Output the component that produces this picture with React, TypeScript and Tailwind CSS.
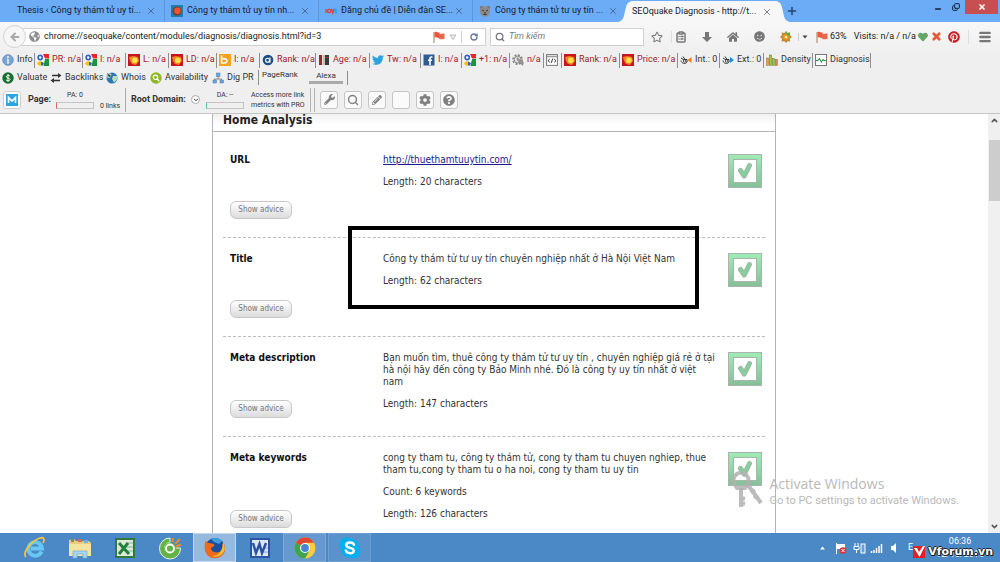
import React, { ReactNode } from 'react';
import { ArrowLeft, Search, ClipboardList, RotateCw, Menu, X, Plus, ChevronDown, ChevronUp, Copy, Minus } from 'lucide-react';
import { FaPinterest, FaHome, FaRegStar, FaSmile, FaTwitter, FaGlobeAmericas, FaCog, FaQuestionCircle, FaHeart, FaWrench, FaPencilAlt } from 'react-icons/fa';

const UI = "font-['Roboto','Open_Sans',sans-serif]";
const TAHOMA = "font-['DejaVu_Sans_Condensed','DejaVu_Sans',sans-serif]";

function GoogleIcon() {
  return (
    <svg viewBox="0 0 12 12" className="size-3 shrink-0">
      <rect width="12" height="12" fill="#fff" />
      <path d="M6 0h6v4.500H8z" fill="#e8262b" />
      <path d="M8 5h4v7H6.500z" fill="#16973c" />
      <circle cx="3.200" cy="3.500" r="2.100" fill="#fff" stroke="#2b62c4" strokeWidth="1.600" />
      <ellipse cx="3" cy="9.500" rx="2.800" ry="2.200" fill="#f3c21b" />
      <path d="M4 7.500l3 1.500-1 2.500H4z" fill="#2b62c4" />
    </svg>
  );
}

function SemIcon() {
  return (
    <svg viewBox="0 0 12 12" className="size-3 shrink-0">
      <rect width="12" height="12" fill="#c6161d" />
      <path d="M1 3l4-1 5 1 1 4-3 4-4-1-2-3z" fill="#f58220" />
      <circle cx="6.800" cy="6.300" r="2.800" fill="#ffe14a" />
    </svg>
  );
}

function BingIcon() {
  return (
    <svg viewBox="0 0 12 12" className="size-3 shrink-0">
      <rect width="12" height="12" fill="#f5a21c" />
      <path d="M2.600 1.500V9h3.600a2.400 2.200 0 0 0 0-4.200H3" fill="none" stroke="#fff" strokeWidth="1.600" />
    </svg>
  );
}

function InfoIcon() {
  return (
    <svg viewBox="0 0 12 12" className="size-3 shrink-0">
      <circle cx="6" cy="6" r="5.300" fill="#78a5d1" stroke="#5c87b3" strokeWidth=".8" />
      <path d="M6 5v4M5 9h2M5.200 5H6" stroke="#fff" strokeWidth="1.200" />
      <circle cx="6" cy="3" r=".9" fill="#fff" />
    </svg>
  );
}

function AlexaIcon() {
  return (
    <svg viewBox="0 0 12 12" className="size-3 shrink-0">
      <circle cx="6" cy="6" r="5.300" fill="#1d4f86" />
      <circle cx="5.600" cy="6.200" r="2" fill="none" stroke="#fff" strokeWidth="1.100" />
      <path d="M8 3.600v5.200" stroke="#fff" strokeWidth="1.100" />
    </svg>
  );
}

function AgeIcon() {
  return (
    <svg viewBox="0 0 12 12" className="size-3 shrink-0">
      <rect x="1" y="1" width="3" height="10" fill="#9b2b2b" />
      <rect x="4.600" y="1" width="1.600" height="10" fill="#c9bdb4" />
      <rect x="6.800" y="1" width="4.200" height="10" fill="#3a3a3a" />
      <path d="M7.500 3.500h3" stroke="#b33" />
    </svg>
  );
}

function FacebookIcon() {
  return (
    <svg viewBox="0 0 12 12" className="size-3 shrink-0">
      <rect x=".5" y=".5" width="11" height="11" fill="#2f5a94" />
      <path d="M9.500 3H8.200C7.300 3 7 3.500 7 4.200V11M5 6.200h4" stroke="#fff" strokeWidth="1.600" fill="none" />
    </svg>
  );
}

function GearIcon() {
  return (
    <svg viewBox="0 0 12 12" className="size-3 shrink-0">
      <circle cx="5.600" cy="5.600" r="4.500" fill="none" stroke="#888" strokeWidth="1.800" strokeDasharray="2 1.500" />
      <circle cx="5.600" cy="5.600" r="3.400" fill="#e9e9e9" stroke="#888" strokeWidth="1" />
      <path d="M5 3.500v2.500l5.500 5.500 1-3z" fill="#999" stroke="#777" strokeWidth=".5" />
    </svg>
  );
}

function SourceIcon() {
  return (
    <svg viewBox="0 0 12 12" className="size-3 shrink-0">
      <rect x=".6" y=".6" width="10.800" height="10.800" fill="#fff" stroke="#777" />
      <path d="M1 2.500h10" stroke="#999" strokeWidth="1.500" />
      <path d="M3.800 5L2 6.700l1.800 1.700M8.200 5L10 6.700 8.200 8.400M6.700 4.600l-1.400 4.200" stroke="#333" fill="none" />
    </svg>
  );
}

function LinkIcon({ out }: { out?: boolean }) {
  return (
    <svg viewBox="0 0 12 12" className="size-3 shrink-0">
      <path d="M1 4l3 2M3 2.500l2 3M1 6.500c0 3 5 4 6 1.500V5.500L4 5.500" fill="none" stroke="#333" strokeWidth="1" />
      <circle cx="4.600" cy="7" r="1.300" fill="none" stroke="#333" strokeWidth=".8" />
      {out ? <path d="M8 3l4 3-4 3z" fill="#1b8fd6" /> : <path d="M11.500 3v6L7.500 6z" fill="#f07a13" />}
    </svg>
  );
}

function DensityIcon() {
  return (
    <svg viewBox="0 0 12 12" className="size-3 shrink-0">
      <rect x=".5" y="4" width="2" height="7.500" fill="#e7a43b" stroke="#a8621c" strokeWidth=".5" />
      <rect x="3.300" y="1" width="2.200" height="10.500" fill="#9ec54b" stroke="#5d7d22" strokeWidth=".5" />
      <rect x="6.300" y="4.500" width="2" height="7" fill="#9ec54b" stroke="#5d7d22" strokeWidth=".5" />
      <rect x="9.200" y="5.500" width="2.200" height="6" fill="#d98b4a" stroke="#a8621c" strokeWidth=".5" />
    </svg>
  );
}

function DiagnosisIcon() {
  return (
    <svg viewBox="0 0 12 12" className="size-3 shrink-0">
      <rect x=".5" y=".5" width="11" height="11" fill="#fff" stroke="#777" />
      <path d="M1 6.500h2l1.400-2 2 3.500 1.600-2.500 1 1h2" fill="none" stroke="#2b9b45" strokeWidth="1.100" />
    </svg>
  );
}

function DollarIcon() {
  return (
    <svg viewBox="0 0 12 12" className="size-3 shrink-0">
      <circle cx="6" cy="6" r="5.700" fill="#15702d" />
      <path d="M8 4.200C7.500 3 4.300 3 4.300 4.700 4.300 6.400 8 5.600 8 7.500 8 9.100 4.600 9 4 7.700M6 2v8" fill="none" stroke="#fff" strokeWidth="1" />
    </svg>
  );
}

function BacklinkIcon() {
  return (
    <svg viewBox="0 0 12 12" className="size-3 shrink-0">
      <path d="M2 3.500h8M10 8.500H3" stroke="#333" strokeWidth="1.300" />
      <path d="M8 1l3.500 2.500L8 6zM4 6L.5 8.500 4 11z" fill="#333" />
    </svg>
  );
}

function WhoisIcon() {
  return (
    <svg viewBox="0 0 12 12" className="size-3 shrink-0">
      <circle cx="6" cy="6" r="5.500" fill="#2b77b5" />
      <path d="M2 2c3-2 4 0 3 2S2 7 1 5zM7 4l4 0c1 4-2 6-3 6.500L6 7z" fill="#b7dcc0" />
      <path d="M1 1l4 3-2 1z" fill="#234" />
    </svg>
  );
}

function AvailIcon() {
  return (
    <svg viewBox="0 0 12 12" className="size-3 shrink-0">
      <circle cx="6" cy="6" r="5.700" fill="#8db82c" />
      <circle cx="5.500" cy="5.300" r="2.200" fill="none" stroke="#fff" strokeWidth="1.200" />
      <path d="M7.200 7l2 2.200" stroke="#fff" strokeWidth="1.400" />
    </svg>
  );
}

function DigIcon() {
  return (
    <svg viewBox="0 0 12 12" className="size-3 shrink-0">
      <path d="M6 4v3M2.500 9V7h7v2" stroke="#888" fill="none" />
      <g fill="#6ea5dc" stroke="#3f77ae" strokeWidth=".5">
        <rect x="4.500" y="1" width="3.500" height="3.500" />
        <rect x="1" y="8" width="3.500" height="3" />
        <rect x="8" y="8" width="3.500" height="3" />
      </g>
    </svg>
  );
}

function FlagIcon() {
  return (
    <svg viewBox="0 0 12 12" className="size-3 shrink-0">
      <path d="M1 1v11" stroke="#b79072" strokeWidth="1.200" />
      <path d="M1.500 1c2-1 3 .5 5 .5V7c-2 0-3-1.500-5-.5z" fill="#f0563a" />
      <path d="M6 2.500c2 1 3 0 5.500 0V8c-2 0-3.500 1-5.500-.5z" fill="#e8684c" />
    </svg>
  );
}

function CheckIcon() {
  return (
    <svg viewBox="0 0 34 34" className="size-[34px] shrink-0">
      <defs>
        <linearGradient id="okFill" x1="0" y1="0" x2="0" y2="1">
          <stop offset="0" stopColor="#a0ecb6" />
          <stop offset="1" stopColor="#85bf97" />
        </linearGradient>
      </defs>
      <rect x=".5" y=".5" width="33" height="33" fill="url(#okFill)" stroke="#a9b5ac" />
      <rect x="5.500" y="5.500" width="23" height="23" fill="#fff" stroke="#a9b5ac" />
      <g fill="none" strokeLinecap="round" strokeLinejoin="round">
        <path d="M12.500 16.500L16.300 22L21.500 11.500" stroke="#a2b3a8" strokeWidth="5" />
        <path d="M12.500 16.500L16.300 22L21.500 11.500" stroke="#86cf9c" strokeWidth="3.200" />
      </g>
    </svg>
  );
}

type Tool = { icon: ReactNode; label: string; w: string; tone?: 'red' | 'dark' };

const topTools: Tool[] = [
  { icon: <InfoIcon />, label: 'Info', w: 'w-[35px]', tone: 'dark' },
  { icon: <GoogleIcon />, label: 'PR: n/a', w: 'w-[48px]' },
  { icon: <GoogleIcon />, label: 'I: n/a', w: 'w-[43px]' },
  { icon: <SemIcon />, label: 'L: n/a', w: 'w-[43px]' },
  { icon: <SemIcon />, label: 'LD: n/a', w: 'w-[48px]' },
  { icon: <BingIcon />, label: 'I: n/a', w: 'w-[43px]' },
  { icon: <AlexaIcon />, label: 'Rank: n/a', w: 'w-[56px]' },
  { icon: <AgeIcon />, label: 'Age: n/a', w: 'w-[54px]' },
  { icon: <FaTwitter className="size-3 shrink-0 text-[#2aa3e0]" />, label: 'Tw: n/a', w: 'w-[51px]' },
  { icon: <FacebookIcon />, label: 'I: n/a', w: 'w-[41px]' },
  { icon: <GoogleIcon />, label: '+1: n/a', w: 'w-[48px]' },
  { icon: <GearIcon />, label: 'n/a', w: 'w-[34px]' },
  { icon: <SourceIcon />, label: '', w: 'w-[18px]' },
  { icon: <SemIcon />, label: 'Rank: n/a', w: 'w-[58px]' },
  { icon: <SemIcon />, label: 'Price: n/a', w: 'w-[58px]' },
  { icon: <LinkIcon />, label: 'Int.: 0', w: 'w-[42px]', tone: 'dark' },
  { icon: <LinkIcon out />, label: 'Ext.: 0', w: 'w-[44px]', tone: 'dark' },
  { icon: <DensityIcon />, label: 'Density', w: 'w-[49px]', tone: 'dark' },
  { icon: <DiagnosisIcon />, label: 'Diagnosis', w: 'w-[58px]', tone: 'dark' },
];

const secondTools: Tool[] = [
  { icon: <DollarIcon />, label: 'Valuate', w: 'w-[48px]' },
  { icon: <BacklinkIcon />, label: 'Backlinks', w: 'w-[56px]' },
  { icon: <WhoisIcon />, label: 'Whois', w: 'w-[44px]' },
  { icon: <AvailIcon />, label: 'Availability', w: 'w-[62px]' },
  { icon: <DigIcon />, label: 'Dig PR', w: 'w-[48px]' },
];

const tabs = [
  { label: 'Thesis ‹ Công ty thám tử uy tí...', icon: null, w: 'w-[165px] pl-[17px] pr-2' },
  {
    label: 'Công ty thám tử uy tín nh...',
    icon: (
      <svg viewBox="0 0 12 12" className="size-3 shrink-0"><rect width="12" height="12" fill="#1f7fae" /><circle cx="6" cy="6" r="4.600" fill="#7c3b35" /><circle cx="6.500" cy="5.800" r="3.200" fill="#f2552e" /></svg>
    ),
    w: 'w-[154px] pl-[6px] pr-2',
  },
  {
    label: 'Đăng chủ đề | Diễn đàn SE...',
    icon: (
      <svg viewBox="0 0 12 12" className="size-3 shrink-0"><g fill="none" strokeWidth="1.300"><path d="M1 4v4" stroke="#e33d3d" /><circle cx="4.200" cy="6" r="1.700" stroke="#e33d3d" /><path d="M6.500 4l1.300 4 1.200-4" stroke="#e33d3d" /><path d="M11.500 4.200H10V6h1.300v1.800H9.800" stroke="#27a5dd" /></g></svg>
    ),
    w: 'w-[154px] pl-[6px] pr-2',
  },
  {
    label: 'Công ty thám tử tư uy tín ...',
    icon: (
      <svg viewBox="0 0 12 12" className="size-3 shrink-0"><circle cx="2.800" cy="2.800" r="2" fill="#777" /><circle cx="9.200" cy="2.800" r="2" fill="#777" /><path d="M1 4l3-2.500h4L11 4v4l-2.500 3.500h-5L1 8z" fill="#8b8b8b" /><path d="M3 5l2 1M9 5L7 6M4.500 9.500h3M6 7v2" stroke="#333" /></svg>
    ),
    w: 'w-[145px] pl-[6px]',
  },
];

function ToolItem({ tool, divided }: { tool: Tool; divided: boolean }) {
  return (
    <button
      type="button"
      aria-label={tool.label || 'Source'}
      className={`flex h-[15px] shrink-0 items-center gap-[3px] whitespace-nowrap pl-[2px] ${tool.w} ${divided ? 'border-r border-[#8e8e8e]' : ''} ${divided && tool.tone !== 'dark' ? 'text-[#a3191f]' : 'text-[#333]'}`}
    >
      {tool.icon}
      <span>{tool.label}</span>
    </button>
  );
}

function TabStrip() {
  return (
    <header className="flex h-[22px] items-stretch bg-[#6cabf6] text-[9px] text-[#14202e]">
      {tabs.map((tab, i) => (
        <div key={tab.label} className={`flex shrink-0 items-center gap-1 whitespace-nowrap ${i < 3 ? 'border-r border-[#5b96dc]' : ''} ${tab.w}`}>
          {tab.icon}
          <button type="button" className="min-w-0 flex-1 text-left">{tab.label}</button>
          <button type="button" aria-label="Close tab"><X className="size-[10px] text-[#3f5f85]" strokeWidth={2} /></button>
        </div>
      ))}
      <svg viewBox="0 0 14 22" className="h-[22px] w-[14px] shrink-0"><path d="M0 22C10 21 4 2 14 1v21z" fill="#f7f7f7" /></svg>
      <div className="mt-px flex w-[144px] shrink-0 items-center whitespace-nowrap bg-[#f7f7f7]">
        <button type="button" className="min-w-0 flex-1 text-left">SEOquake Diagnosis - http://t...</button>
        <button type="button" aria-label="Close tab" className="mr-1"><X className="size-[10px] text-[#666]" strokeWidth={2} /></button>
      </div>
      <svg viewBox="0 0 14 22" className="h-[22px] w-[14px] shrink-0"><path d="M14 22C4 21 10 2 0 1v21z" fill="#f7f7f7" /></svg>
      <button type="button" aria-label="New tab" className="-ml-1"><Plus className="size-3 text-[#24456e]" strokeWidth={3} /></button>
      <div className="ml-auto flex items-start">
        <button type="button" aria-label="Minimize" className="flex h-[14px] w-[19px] items-center justify-center pt-1"><Minus className="size-2" strokeWidth={5} /></button>
        <button type="button" aria-label="Restore" className="flex h-[14px] w-[18px] items-center justify-center"><Copy className="size-2 -scale-y-100" strokeWidth={3} /></button>
        <button type="button" aria-label="Close" className="mr-[2px] flex h-[14px] w-[33px] items-center justify-center bg-[#c84f50]"><X className="size-2 text-white" strokeWidth={5} /></button>
      </div>
    </header>
  );
}

function NavBar() {
  return (
    <div className="flex h-[29px] items-center bg-gradient-to-b from-[#f7f7f7] to-[#f0f0f0] pl-[3px] text-[9px] text-[#222]">
      <button type="button" aria-label="Back" className="z-10 flex size-[23px] shrink-0 items-center justify-center rounded-full border border-[#d2d2d2] bg-[#f6f6f6]">
        <ArrowLeft className="size-3 text-[#aaa]" strokeWidth={4} />
      </button>
      <div className="-ml-2 flex h-[18px] min-w-0 flex-1 items-center border border-[#d0d0d0] bg-white pl-[10px]">
        <FaGlobeAmericas className="size-[11px] shrink-0 text-[#8c8c8c]" />
        <input aria-label="Address" defaultValue="chrome://seoquake/content/modules/diagnosis/diagnosis.html?id=3" className="ml-1 min-w-0 flex-1 bg-transparent outline-none" />
        <FlagIcon />
        <svg viewBox="0 0 8 8" className="ml-1 size-2"><path d="M1 2h6L4 6.500z" fill="#eee" stroke="#bbb" /></svg>
        <button type="button" aria-label="Reload" className="ml-1 flex h-3 w-6 items-center justify-center border-l border-[#ccc]"><RotateCw className="size-2 text-[#6b7d99]" strokeWidth={4} /></button>
      </div>
      <div className="ml-1 flex h-[18px] w-[154px] shrink-0 items-center border border-[#d0d0d0] bg-white pl-1">
        <Search className="size-[10px] text-[#777]" strokeWidth={3} />
        <input aria-label="Search" placeholder="Tìm kiếm" className="ml-1 w-24 bg-transparent italic outline-none placeholder:text-[#777]" />
      </div>
      <div className="flex w-[356px] shrink-0 items-center text-[#777]">
        <button type="button" aria-label="Bookmark" className="flex w-[27px] justify-center"><FaRegStar className="size-3" /></button>
        <button type="button" aria-label="Bookmarks list" className="flex w-[20px] justify-center border-l border-[#ddd]"><ClipboardList className="size-3" strokeWidth={3} /></button>
        <button type="button" aria-label="Downloads" className="flex w-[32px] justify-center"><svg viewBox="0 0 12 12" className="size-3"><path d="M4 1h4v5h3L6 11 1 6h3z" fill="#777" /></svg></button>
        <button type="button" aria-label="Home" className="flex w-[22px] justify-center"><FaHome className="size-3" /></button>
        <button type="button" aria-label="Chat" className="flex w-[30px] justify-center"><FaSmile className="size-[11px]" /></button>
        <button type="button" aria-label="SEOquake" className="flex w-[24px] justify-center">
          <svg viewBox="0 0 12 12" className="size-3"><path d="M6 0l1.300 2L10 1.500 9.800 4 12 6 9.800 7.800l.4 2.700-2.700-.3L6 12 4.400 10.200l-2.900.3.500-2.700L0 6l2-2-.4-2.500 2.900.5z" fill="#c78a33" /><path d="M6 0l1.300 2L10 1.500 9.800 4 6 6z" fill="#6aa73a" /><circle cx="6" cy="6" r="2.600" fill="#f19b2e" /><circle cx="6" cy="6" r="1.200" fill="#fff0b0" /></svg>
        </button>
        <button type="button" aria-label="SEOquake menu" className="flex w-[18px] justify-center border-l border-[#ccc] pr-1"><svg viewBox="0 0 8 8" className="size-2"><path d="M1.500 2.500h5L4 5.500z" fill="#444" /></svg></button>
        <FlagIcon />
        <span className="w-[26px] pl-[2px] text-[#222]">63%</span>
        <span className="w-[65px] whitespace-nowrap text-[#222]">Visits: n/a / n/a</span>
        <FaHeart className="size-[10px] text-[#68a568]" />
        <X className="ml-[3px] size-[11px] text-[#e8583b]" strokeWidth={6} />
        <FaPinterest className="ml-[6px] size-3 text-[#cb2027]" />
        <button type="button" aria-label="Menu" className="ml-2 flex w-8 justify-center border-l border-[#ddd]"><Menu className="size-[14px]" strokeWidth={4} /></button>
      </div>
    </div>
  );
}

const squareBtn = 'flex size-[18px] items-center justify-center rounded-[3px] border border-[#c4c4c4] bg-[#fafafa] text-[#808080]';

function Toolbars() {
  return (
    <div className="border-b border-[#c4c4c4] bg-[#efefef] text-[9px] text-[#333]">
      <div className="flex h-[18px] items-center">
        {topTools.map((t, i) => <ToolItem key={i} tool={t} divided />)}
      </div>
      <div className="flex h-[17px] items-center">
        {secondTools.map((t) => <ToolItem key={t.label} tool={t} divided={false} />)}
        <button type="button" className="flex h-[15px] w-[49px] shrink-0 items-start border-l border-[#8e8e8e] pl-[3px] text-[8px] leading-[10px]">PageRank</button>
        <button type="button" className="ml-[2px] h-[13px] w-[34px] border-b-[3px] border-[#aaa] text-[8px] leading-[10px]">Alexa</button>
        <span className="ml-1 h-[14px] border-l border-[#8e8e8e]" />
      </div>
      <div className="flex h-[27px] items-center">
        <span className="ml-[3px] flex size-[18px] items-center justify-center rounded-[3px] border border-[#ccc] bg-white">
          <svg viewBox="0 0 12 12" className="size-3"><rect width="12" height="12" fill="#2aa5dd" /><path d="M2.500 9V3.500L6 7l3.500-3.500V9" fill="none" stroke="#fff" strokeWidth="1.600" /></svg>
        </span>
        <b className="ml-[7px] w-[28px]">Page:</b>
        <div className="flex w-[38px] flex-col items-center gap-[3px] text-[7px] leading-[8px]">
          <span>PA: 0</span>
          <span className="h-[7px] w-full border border-[#c4c4c4] border-l-[#d66]" />
        </div>
        <span className="ml-[6px] w-[25px] whitespace-nowrap pt-3 text-[7px] leading-[8px]">0 links</span>
        <span className="h-6 border-l border-[#aaa]" />
        <b className="ml-[5px] w-[57px] whitespace-nowrap">Root Domain:</b>
        <button type="button" aria-label="Choose domain" className="ml-[3px] flex size-[9px] items-center justify-center rounded-full border border-[#aaa] bg-white"><ChevronDown className="size-[6px]" strokeWidth={4} /></button>
        <div className="ml-[6px] flex w-[38px] flex-col items-center gap-[3px] text-[7px] leading-[8px]">
          <span>DA: --</span>
          <span className="h-[7px] w-full border border-[#c4c4c4] border-l-[#5bb]" />
        </div>
        <span className="ml-[7px] w-[59px] whitespace-nowrap text-[7px] leading-[10px]">Access more link<br />metrics with PRO</span>
        <span className="h-6 w-[5px] border-x border-[#b4b4b4]" />
        <div className="ml-[5px] flex gap-[6px]">
          <button type="button" aria-label="Tools" className={squareBtn}><FaWrench className="size-[11px]" /></button>
          <button type="button" aria-label="Find" className={squareBtn}><Search className="size-3" strokeWidth={3} /></button>
          <button type="button" aria-label="Highlight" className={squareBtn}><FaPencilAlt className="size-[10px]" /></button>
          <button type="button" aria-label="Blank" className={squareBtn} />
          <button type="button" aria-label="Settings" className={squareBtn}><FaCog className="size-3" /></button>
          <button type="button" aria-label="Help" className={squareBtn}><FaQuestionCircle className="size-3" /></button>
        </div>
      </div>
    </div>
  );
}

function Row({ label, children, marked }: { label: string; children: ReactNode; marked?: boolean }) {
  return (
    <section className="relative mx-[10px] flex border-b border-dashed border-[#bdbdbd] pb-4 pl-[7px] pr-[3px] pt-[15px]">
      <div className="flex min-h-[67px] w-[153px] shrink-0 flex-col items-start justify-between pb-[2px]">
        <h2 className="text-[10px] font-bold leading-3 text-[#111]">{label}</h2>
        <button type="button" className="h-[18px] w-[62px] rounded-[6px] border border-[#c8c8c8] bg-gradient-to-b from-white to-[#dcdcdc] text-[8px] leading-3 text-[#777]">Show advice</button>
      </div>
      <div className="min-w-0 flex-1 pb-[10px] text-[10px] leading-3 text-[#333] [&>p+p]:mt-[10px]">{children}</div>
      <CheckIcon />
      {marked && <div className="pointer-events-none absolute -top-3 left-[125px] h-[83px] w-[351px] border-4 border-black" />}
    </section>
  );
}

function Page() {
  return (
    <div className="relative flex min-h-0 flex-1 bg-white">
      <main className={`flex min-w-0 flex-1 justify-center overflow-hidden ${TAHOMA}`}>
        <div className="h-max min-h-full w-[564px] border-x border-[#b4b4b4]">
          <h1 className="mb-[7px] h-[18px] border-b border-[#b4b4b4] bg-gradient-to-b from-[#f0f0f0] to-white to-60% pl-[10px] text-[12px] font-bold leading-[13px] text-[#222]">Home Analysis</h1>
          <Row label="URL">
            <p><a href="http://thuethamtuuytin.com/" className="text-[#1a1a8c] underline">http://thuethamtuuytin.com/</a></p>
            <p>Length: 20 characters</p>
          </Row>
          <Row label="Title" marked>
            <p>Công ty thám tử tư uy tín chuyên nghiệp nhất ở Hà Nội Việt Nam</p>
            <p>Length: 62 characters</p>
          </Row>
          <Row label="Meta description">
            <p>Bạn muốn tìm, thuê công ty thám tử tư uy tín , chuyên nghiệp giá rẻ ở tại<br />hà nội hãy đến công ty Bảo Minh nhé. Đó là công ty uy tín nhất ở việt<br />nam</p>
            <p>Length: 147 characters</p>
          </Row>
          <Row label="Meta keywords">
            <p>cong ty tham tu, công ty thám tử, cong ty tham tu chuyen nghiep, thue<br />tham tu,cong ty tham tu o ha noi, cong ty tham tu uy tin</p>
            <p>Count: 6 keywords</p>
            <p>Length: 126 characters</p>
          </Row>
        </div>
      </main>
      <div className="flex w-3 shrink-0 flex-col items-center justify-between bg-[#f0f0f0] py-[2px]">
        <ChevronUp className="size-[9px] text-[#555]" strokeWidth={4} />
        <span className="mb-auto mt-[15px] h-[61px] w-[11px] bg-[#cdcdcd]" />
        <ChevronDown className="size-[9px] text-[#555]" strokeWidth={4} />
      </div>
      <div className="pointer-events-none absolute bottom-[22px] right-[41px] flex items-center gap-1 text-[#b9b9b9]">
        <svg viewBox="0 0 34 40" className="h-10 w-[34px]">
          <g fill="none" stroke="#b0b0b0" strokeOpacity=".85">
            <path d="M3 12a7.500 7.500 0 1 1 14 0l-3 5H6z" strokeWidth="4" />
            <path d="M10 17v19M10 27l4 1M10 32l4 1" strokeWidth="4" />
            <path d="M17 14l13 18M23 27l4-3M20 22l4-3" strokeWidth="4" />
          </g>
        </svg>
        <div className="whitespace-nowrap">
          <div className="font-['Open_Sans',sans-serif] text-[14px] leading-[18px]">Activate Windows</div>
          <div className="text-[11px] leading-[15px]">Go to PC settings to activate Windows.</div>
        </div>
      </div>
    </div>
  );
}

function IeIcon() {
  return (
    <svg viewBox="0 0 24 24" className="size-6">
      <path d="M18.500 15.500A6.800 6.800 0 1 1 19 12.500H8" fill="none" stroke="#69c8f3" strokeWidth="3.800" />
      <path d="M3 21C-1 17 8 5 17 2c4-1 5 1 3 5" fill="none" stroke="#f3c33a" strokeWidth="1.800" />
    </svg>
  );
}
function FolderIcon() {
  return (
    <svg viewBox="0 0 24 24" className="size-6">
      <path d="M1 4l5-1 2 2h13l2 2v13H1z" fill="#e8cd7c" />
      <path d="M3 3h3v3H3z" fill="#5aa54e" /><path d="M10 3h4v3h-4z" fill="#d86a4b" /><path d="M16 4h4v3h-4z" fill="#6fb1de" />
      <path d="M1 8h22v12H1z" fill="#f5e3a0" />
      <path d="M5 22v-7h14v7h-4v-4H9v4z" fill="#a8d6f2" stroke="#6eaed8" strokeWidth=".7" />
    </svg>
  );
}
function ExcelIcon() {
  return (
    <svg viewBox="0 0 24 24" className="size-6">
      <rect x="2" y="2" width="20" height="20" fill="#2f7a3c" />
      <rect x="4" y="4" width="16" height="16" fill="#dcebd8" />
      <path d="M13 7h7M13 11h7M13 15h7" stroke="#8ab58f" />
      <path d="M6 7l10 11M15 7L6 18" stroke="#23813a" strokeWidth="3" />
    </svg>
  );
}
function CocIcon() {
  return (
    <svg viewBox="0 0 24 24" className="size-6">
      <path d="M12 2A10.500 10.500 0 1 0 22.500 12l-5 0a5.500 5.500 0 1 1-5.500-5.500z" fill="#63b345" stroke="#e8f5df" strokeWidth="1" />
      <circle cx="12" cy="12.500" r="6" fill="#63b345" />
      <circle cx="12" cy="12.500" r="4" fill="#63b345" stroke="#fff" strokeWidth="1.800" />
      <path d="M14.500 6l.5-4M17 8l5-5M18 10.500l5-2" stroke="#f08a24" strokeWidth="2" />
    </svg>
  );
}
function FirefoxIcon() {
  return (
    <svg viewBox="0 0 24 24" className="size-6">
      <circle cx="12" cy="12" r="10" fill="#1d4e9c" />
      <path d="M8 3c3-2 8-1 11 2l-3 3-5-2z" fill="#3d9edb" />
      <path d="M3 4c0 2 1 3 3 3l5 1c1 2-1 3-3 4 0 4 6 6 10 3 2-2 2-5 1-8 4 4 4 9 0 12.500-5 4.500-13 3.500-16-2.500C1 13 1 8 3 4z" fill="#ee6a1f" />
      <path d="M20 6c3 5 2 10-2 13-3 2-7 2-9 1 7 0 11-6 11-14z" fill="#f9bd35" />
    </svg>
  );
}
function WordIcon() {
  return (
    <svg viewBox="0 0 24 24" className="size-6">
      <rect x="2" y="2" width="20" height="20" fill="#2b55a3" />
      <rect x="4" y="4" width="16" height="16" fill="#dde7f6" />
      <path d="M15 16h5M15 12h5" stroke="#8aa5d3" />
      <path d="M5 7l3 10 3.500-9L14 17l4-10" fill="none" stroke="#2952a3" strokeWidth="2.500" />
    </svg>
  );
}
function ChromeIcon() {
  return (
    <svg viewBox="0 0 24 24" className="size-6">
      <circle cx="12" cy="12" r="10.500" fill="#f7ce3e" />
      <path d="M12 12L2.900 6.700A10.500 10.500 0 0 1 21.100 6.700H12z" fill="#df4633" />
      <path d="M12 12L2.900 6.700A10.500 10.500 0 0 0 12 22.500l4.500-8z" fill="#3fa450" />
      <circle cx="12" cy="12" r="5" fill="#fff" /><circle cx="12" cy="12" r="3.900" fill="#4a86cf" />
    </svg>
  );
}
function SkypeIcon() {
  return (
    <svg viewBox="0 0 24 24" className="size-6">
      <circle cx="8" cy="8" r="6.500" fill="#00aff0" /><circle cx="16" cy="16" r="6.500" fill="#00aff0" /><circle cx="12" cy="12" r="9.500" fill="#00aff0" />
      <path d="M16 8.800C15 5.500 8.300 5.800 8.300 9.200c0 3.500 7.500 2 7.500 5.500 0 3.600-7 3.300-8-.2" fill="none" stroke="#fff" strokeWidth="2.400" strokeLinecap="round" />
    </svg>
  );
}

const apps = [
  { name: 'Internet Explorer', icon: <IeIcon />, cls: '' },
  { name: 'File Explorer', icon: <FolderIcon />, cls: '' },
  { name: 'Excel', icon: <ExcelIcon />, cls: '' },
  { name: 'Coc Coc', icon: <CocIcon />, cls: '' },
  { name: 'Firefox', icon: <FirefoxIcon />, cls: 'border border-[#c3d8ee] bg-[#96badf]' },
  { name: 'Word', icon: <WordIcon />, cls: '' },
  { name: 'Chrome', icon: <ChromeIcon />, cls: 'border border-[#7eaad8] bg-[#6699cf]' },
  { name: 'Skype', icon: <SkypeIcon />, cls: 'border border-[#6fa0d3] bg-[#5a92cb]' },
];

function Taskbar() {
  return (
    <footer className="flex h-[29px] shrink-0 items-stretch bg-[#4a88c6] pl-[13px] text-white">
      <div className="flex gap-[2px]">
        {apps.map((a) => (
          <button key={a.name} type="button" aria-label={a.name} className={`flex w-[43px] items-center justify-center ${a.cls}`}>{a.icon}</button>
        ))}
      </div>
      <div className="relative ml-auto flex w-[182px] items-center">
        <svg viewBox="0 0 90 14" className="h-[14px] w-[90px]">
          <path d="M2 8.500h5L4.500 5.500z" fill="#fff" />
          <path d="M18.500 2v11" stroke="#fff" /><path d="M19 3h8v5h-8z" fill="#fff" />
          <circle cx="25" cy="9.500" r="3.300" fill="#d9372b" /><path d="M23.500 8l3 3M26.500 8l-3 3" stroke="#fff" />
          <path d="M37 2v3M40 2v3M36 5.500h5v3h-5zM38.500 8v4" stroke="#fff" fill="none" /><rect x="43" y="3" width="4" height="9" fill="#6a9fd2" stroke="#fff" />
          <path d="M53.500 12v-2M56 12V9M58.500 12V7M61 12V5M63.500 12V3" stroke="#fff" strokeWidth="1.500" />
          <path d="M73 5h2l3-3v10l-3-3h-2z" fill="#fff" />
        </svg>
        <span className="text-[9px]">E</span>
        <div className="ml-auto mr-4 text-center text-[9px] leading-[13px]">06:36<br />12/10/2015</div>
        <div className="absolute bottom-0 right-[7px] flex items-center gap-[3px]">
          <svg viewBox="0 0 12 12" className="size-3"><rect width="12" height="12" fill="#e01f26" /><path d="M1 2h3l2 4 4-6 2 0-5.500 11z" fill="#fff" /></svg>
          <strong className="font-['DejaVu_Sans',sans-serif] text-[11px] leading-5 [text-shadow:1px_0_#222,-1px_0_#222,0_1px_#222,0_-1px_#222,1px_1px_#222]">Vforum.vn</strong>
        </div>
      </div>
    </footer>
  );
}

export default function App() {
  return (
    <div className={`flex h-screen flex-col overflow-hidden ${UI}`}>
      <TabStrip />
      <NavBar />
      <Toolbars />
      <Page />
      <Taskbar />
    </div>
  );
}
